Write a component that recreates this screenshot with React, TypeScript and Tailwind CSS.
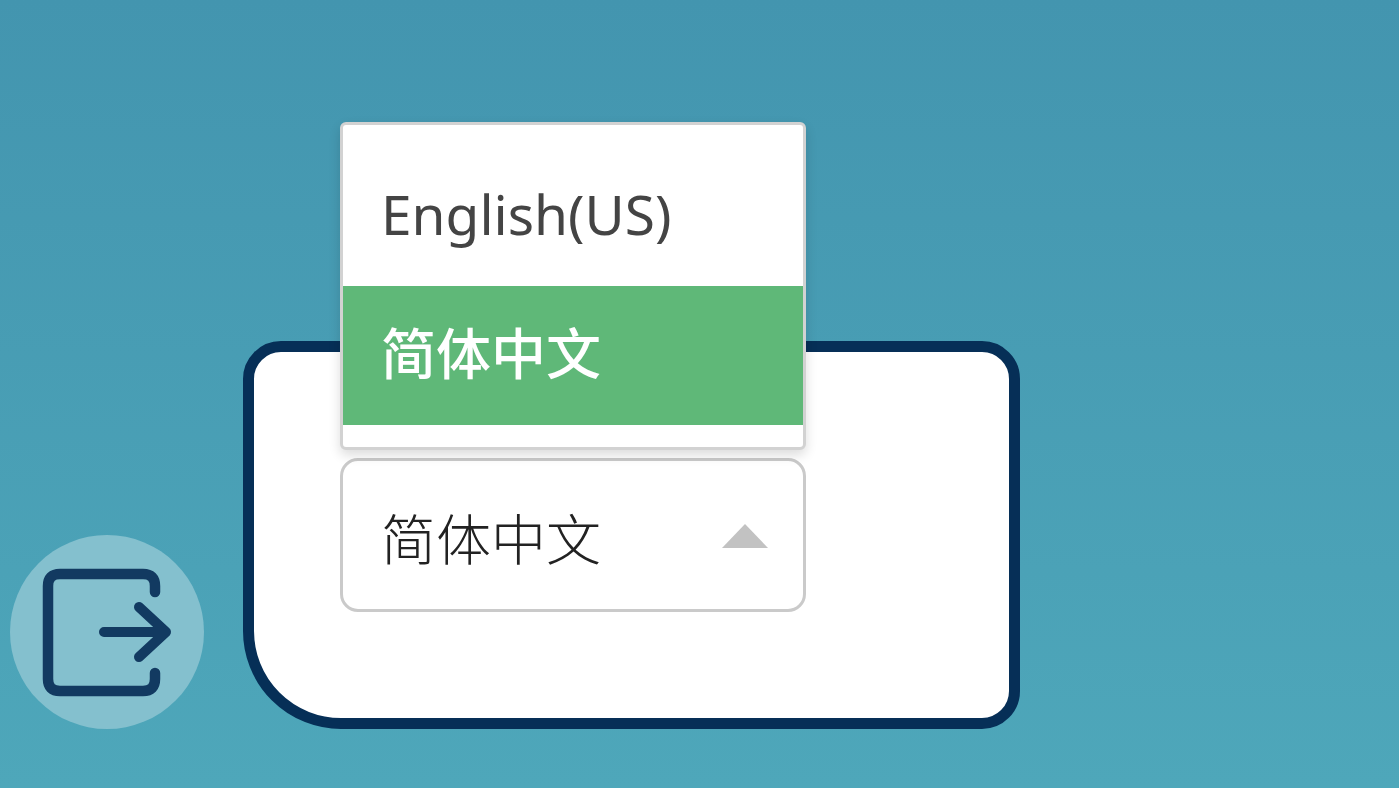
import { useState } from 'react';
import type { KeyboardEvent, MouseEvent } from 'react';
import clsx from 'clsx';

const languages = [
  { code: 'en-US', label: 'English(US)' },
  { code: 'zh-CN', label: '简体中文' },
];

function ExitIcon() {
  return (
    <svg viewBox="0 0 194 194" className="size-full" fill="none" stroke="#123a61" strokeLinecap="round" strokeLinejoin="round" aria-hidden="true">
      <path strokeWidth="10.5" d="M145 57V51Q145 39 133 39H50Q38 39 38 51V144Q38 156 50 156H133Q145 156 145 144V138" />
      <path strokeWidth="10" d="M94 97H155M129 72L156 97L129 122" />
    </svg>
  );
}

function LanguageSelect() {
  const [value, setValue] = useState('zh-CN');
  const [open, setOpen] = useState(true);

  // The styled list replaces the browser's own popup
  const toggle = (e: MouseEvent<HTMLSelectElement>) => {
    e.preventDefault();
    e.currentTarget.focus();
    setOpen(o => !o);
  };

  const onKeyDown = (e: KeyboardEvent<HTMLSelectElement>) => {
    if (e.key === 'Escape') setOpen(false);
    if (e.key === 'Enter' || e.key === ' ') {
      e.preventDefault();
      setOpen(o => !o);
    }
  };

  const choose = (code: string) => {
    setValue(code);
    setOpen(false);
  };

  return (
    <div className="relative w-full max-w-[466px]">
      <select
        aria-label="Language"
        value={value}
        onChange={e => setValue(e.target.value)}
        onMouseDown={toggle}
        onKeyDown={onKeyDown}
        className="block h-[154px] w-full cursor-pointer appearance-none rounded-[18px] border-[3px] border-[#cacaca] bg-white pl-[38px] pr-24 pt-1.5 font-light text-[#222] outline-none"
      >
        {languages.map(l => (
          <option key={l.code} value={l.code}>{l.label}</option>
        ))}
      </select>
      <svg viewBox="0 0 46 24" className={clsx('pointer-events-none absolute right-[38px] top-[66px] h-6 w-[46px]', !open && 'rotate-180')} aria-hidden="true">
        <path d="M23 0L46 24H0Z" fill="#c2c2c2" />
      </svg>

      {open && (
        <div role="listbox" aria-label="Language options" className="absolute bottom-full left-0 mb-2 w-full rounded-md border-[3px] border-[#d2d2d2] bg-white py-[22px] shadow-[0_5px_12px_rgba(0,0,0,0.14)]">
          {languages.map(l => (
            <button
              key={l.code}
              type="button"
              role="option"
              aria-selected={l.code === value}
              onClick={() => choose(l.code)}
              className={clsx(
                'block h-[139px] w-full cursor-pointer px-[38px] pb-1.5 text-left',
                l.code === value ? 'bg-[#5fb878] font-medium text-white' : 'text-[#444]'
              )}
            >
              {l.label}
            </button>
          ))}
        </div>
      )}
    </div>
  );
}

export default function App() {
  return (
    <main className="flex min-h-screen items-end gap-[39px] bg-linear-to-b from-[#4395af] to-[#4ea7ba] pb-[59px] pl-[10px] pr-8 pt-28 font-['Noto_Sans','Noto_Sans_CJK_SC',sans-serif] text-[55px] leading-none">
      <button type="button" aria-label="Exit" className="size-[194px] shrink-0 cursor-pointer rounded-full bg-[#84c0ce]">
        <ExitIcon />
      </button>
      <section className="max-w-[777px] flex-1 rounded-[38px] rounded-bl-[98px] border-[11px] border-[#062f57] bg-white px-[86px] py-[106px]">
        <LanguageSelect />
      </section>
    </main>
  );
}
